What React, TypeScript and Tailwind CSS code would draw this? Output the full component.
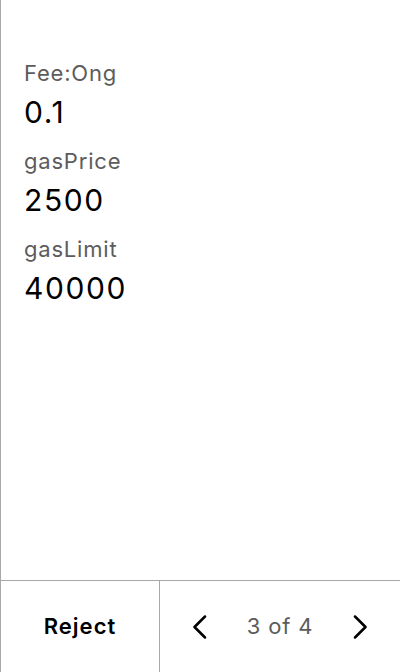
import React from "react";

export default function App() {
  const rows = [
    { label: "Fee:Ong", value: "0.1" },
    { label: "gasPrice", value: "2500" },
    { label: "gasLimit", value: "40000" },
  ];
  return (
    <div
      className="w-[400px] h-[672px] bg-white border-l border-[#a8a8a8] flex flex-col"
      style={{ fontFamily: "Inter, 'Noto Sans', sans-serif" }}
    >
      <div className="flex-1 pt-[59px] pl-[23px] flex flex-col gap-[17px]">
        {rows.map((r) => (
          <div key={r.label} className="flex flex-col gap-[7px]">
            <div className="text-[22px] leading-[28px] tracking-[0.8px] text-[#5c5c5c]">{r.label}</div>
            <div className="text-[30px] leading-[36px] tracking-[1.6px] text-black">{r.value}</div>
          </div>
        ))}
      </div>
      <div className="h-[92px] border-t border-[#a8a8a8] flex">
        <div className="w-[159px] border-r border-[#a8a8a8] flex items-center justify-center">
          <span className="text-[22px] font-semibold tracking-[1px] text-black">Reject</span>
        </div>
        <div className="flex-1 flex items-center justify-between pl-[32px] pr-[32px]">
          <svg width="16" height="24" viewBox="0 0 16 24" fill="none" stroke="black" strokeWidth="2.5" strokeLinecap="round" strokeLinejoin="round">
            <path d="M13 1.5 L2.5 12 L13 22.5" />
          </svg>
          <span className="text-[22px] tracking-[0.8px] text-[#5c5c5c]">3 of 4</span>
          <svg width="16" height="24" viewBox="0 0 16 24" fill="none" stroke="black" strokeWidth="2.5" strokeLinecap="round" strokeLinejoin="round">
            <path d="M3 1.5 L13.5 12 L3 22.5" />
          </svg>
        </div>
      </div>
    </div>
  );
}
